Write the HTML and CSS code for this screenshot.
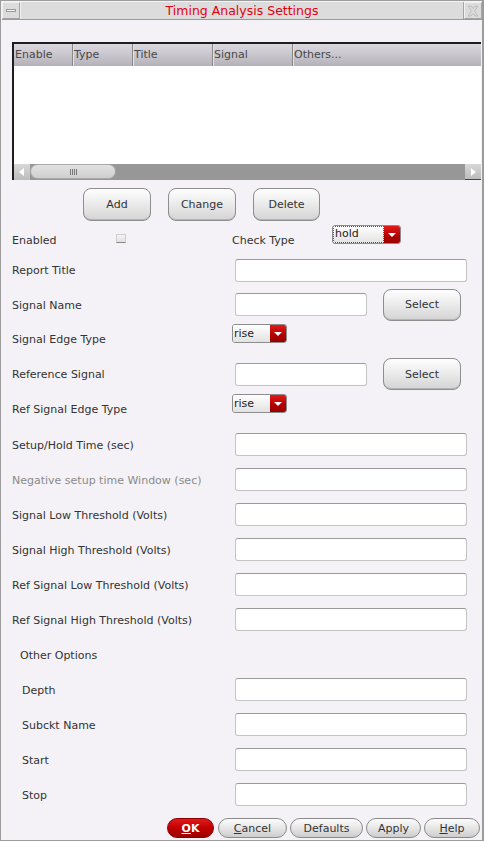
FILE: index.html
```html
<!DOCTYPE html>
<html>
<head>
<meta charset="utf-8">
<link rel="stylesheet" href="styles.css">
</head>
<body>
<div class="win">
  <div class="titlebar">
    <div class="tb-btn"><span class="min-bar"></span></div>
    <div class="title">Timing Analysis Settings</div>
    <div class="tb-btn">
      <svg width="14" height="14" viewBox="0 0 14 14"><path d="M2 2 L5 2 L7 4.5 L9 2 L12 2 L8.5 7 L12 12 L9 12 L7 9.5 L5 12 L2 12 L5.5 7 Z" fill="none" stroke="#bdbdbd" stroke-width="1"/></svg>
    </div>
  </div>
  <div class="content">
    <div class="table">
      <div class="thead">
        <div class="th c1">Enable</div>
        <div class="th c2">Type</div>
        <div class="th c3">Title</div>
        <div class="th c4">Signal</div>
        <div class="th c5">Others...</div>
      </div>
      <div class="tbody"></div>
      <div class="hscroll">
        <div class="sb-btn"><svg width="8" height="10" viewBox="0 0 8 10"><path d="M6 1 L1 5 L6 9 Z" fill="#fff"/></svg></div>
        <div class="sb-thumb"><span class="grip"></span></div>
        <div class="sb-track"></div>
        <div class="sb-btn right"><svg width="8" height="10" viewBox="0 0 8 10"><path d="M2 1 L7 5 L2 9 Z" fill="#fff"/></svg></div>
      </div>
    </div>

    <div class="btnrow">
      <div class="btn w-add">Add</div>
      <div class="btn w-change">Change</div>
      <div class="btn w-delete">Delete</div>
    </div>

    <div class="form">
      <div class="row h30 top">
        <div class="lbl l-enabled">Enabled</div>
        <div class="check"></div>
        <div class="lbl l-check">Check Type</div>
        <div class="dd dd-hold"><div class="dd-text"><span class="focus">hold</span></div><div class="dd-arrow"><svg width="8" height="6" viewBox="0 0 8 6"><path d="M0 1 L8 1 L4 5 Z" fill="#fff"/></svg></div></div>
      </div>
      <div class="row h30">
        <div class="lbl">Report Title</div>
        <div class="input long"></div>
      </div>
      <div class="row h39">
        <div class="lbl">Signal Name</div>
        <div class="input short"></div>
        <div class="btn sel">Select</div>
      </div>
      <div class="row h30 top">
        <div class="lbl">Signal Edge Type</div>
        <div class="dd dd-rise"><div class="dd-text">rise</div><div class="dd-arrow"><svg width="8" height="6" viewBox="0 0 8 6"><path d="M0 1 L8 1 L4 5 Z" fill="#fff"/></svg></div></div>
      </div>
      <div class="row h40">
        <div class="lbl">Reference Signal</div>
        <div class="input short"></div>
        <div class="btn sel">Select</div>
      </div>
      <div class="row h33 top">
        <div class="lbl">Ref Signal Edge Type</div>
        <div class="dd dd-rise"><div class="dd-text">rise</div><div class="dd-arrow"><svg width="8" height="6" viewBox="0 0 8 6"><path d="M0 1 L8 1 L4 5 Z" fill="#fff"/></svg></div></div>
      </div>
      <div class="row"><div class="lbl">Setup/Hold Time (sec)</div><div class="input long"></div></div>
      <div class="row"><div class="lbl dim">Negative setup time Window (sec)</div><div class="input long"></div></div>
      <div class="row"><div class="lbl">Signal Low Threshold (Volts)</div><div class="input long"></div></div>
      <div class="row"><div class="lbl">Signal High Threshold (Volts)</div><div class="input long"></div></div>
      <div class="row"><div class="lbl">Ref Signal Low Threshold (Volts)</div><div class="input long"></div></div>
      <div class="row"><div class="lbl">Ref Signal High Threshold (Volts)</div><div class="input long"></div></div>
      <div class="row"><div class="lbl ind1">Other Options</div></div>
      <div class="row"><div class="lbl ind2">Depth</div><div class="input long"></div></div>
      <div class="row"><div class="lbl ind2">Subckt Name</div><div class="input long"></div></div>
      <div class="row"><div class="lbl ind2">Start</div><div class="input long"></div></div>
      <div class="row"><div class="lbl ind2">Stop</div><div class="input long"></div></div>
    </div>

    <div class="footer">
      <div class="pill ok"><u>O</u>K</div>
      <div class="pill w-cancel"><u>C</u>ancel</div>
      <div class="pill w-defaults">Defaults</div>
      <div class="pill w-apply">Apply</div>
      <div class="pill w-help"><u>H</u>elp</div>
    </div>
  </div>
</div>
</body>
</html>
```
FILE: styles.css
```css
* { box-sizing: border-box; }
html, body { margin: 0; padding: 0; }
body {
  font-family: "DejaVu Sans", sans-serif;
  font-size: 11px;
  color: #333;
  background: #f4f2f6;
}
.win {
  width: 484px;
  height: 841px;
  border: 1px solid #9c9c9c;
  border-right: 2px solid #9c9c9c;
  background: #f4f2f6;
  display: flex;
  flex-direction: column;
}
.titlebar {
  margin: 1px 0 0 1px;
  width: 480px;
  height: 18px;
  display: flex;
  background: #dcdcdc;
  border-bottom: 1px solid #9a9a9a;
}
.tb-btn {
  width: 18px;
  height: 17px;
  background: #dcdcdc;
  border: 1px solid #a4a4a4;
  border-top-color: #f0f0f0;
  border-left-color: #f0f0f0;
  display: flex;
  align-items: center;
  justify-content: center;
}
.min-bar {
  width: 10px;
  height: 3px;
  border: 1px solid #9a9a9a;
  background: #f4f4f4;
}
.title {
  flex: 1;
  text-align: center;
  color: #e4000c;
  font-size: 12.5px;
  line-height: 17px;
  border-left: 1px solid #f0f0f0;
  border-right: 1px solid #a4a4a4;
}
.content {
  flex: 1;
  display: flex;
  flex-direction: column;
  padding-left: 11px;
}
.table {
  margin-top: 22px;
  width: 469px;
  height: 138px;
  border-top: 2px solid #1e1e1e;
  border-left: 2px solid #1e1e1e;
  display: flex;
  flex-direction: column;
  background: #fff;
}
.thead {
  height: 22px;
  display: flex;
  background: linear-gradient(#dcd8e0, #c9c5cd 50%, #b5b1b9);
}
.th {
  height: 22px;
  line-height: 22px;
  padding-left: 1px;
  color: #484848;
  border-right: 1px solid #888;
  box-shadow: 1px 0 0 #e4e0e8;
}
.c1 { width: 59px; }
.c2 { width: 60px; }
.c3 { width: 80px; }
.c4 { width: 80px; }
.c5 { flex: 1; border-right: none; box-shadow: none; }
.tbody { flex: 1; background: #fff; }
.hscroll {
  height: 16px;
  display: flex;
  background: #979797;
}
.sb-btn {
  width: 16px;
  height: 16px;
  background: linear-gradient(#d8d8d8, #bcbcbc);
  display: flex;
  align-items: center;
  justify-content: center;
}
.sb-btn.right { border-bottom: 1px solid #444; }
.sb-thumb {
  width: 86px;
  height: 15px;
  border-radius: 8px;
  background: linear-gradient(#e2e2e2, #cfcfcf);
  border: 1px solid #a8a8a8;
  display: flex;
  align-items: center;
  justify-content: center;
}
.grip {
  width: 7px;
  height: 6px;
  background: repeating-linear-gradient(90deg, #777 0 1px, transparent 1px 2px);
}
.sb-track { flex: 1; }

.btnrow {
  margin-top: 8px;
  height: 33px;
  display: flex;
  gap: 17px;
  padding-left: 71px;
}
.btn {
  height: 33px;
  border: 1px solid #8e8e8e;
  border-radius: 8px;
  background: linear-gradient(#fefefe, #ececec 45%, #d4d4d4);
  box-shadow: inset 0 -1px 0 #b4b4b4;
  display: flex;
  align-items: center;
  justify-content: center;
  color: #333;
}
.w-add { width: 68px; }
.w-change { width: 68px; }
.w-delete { width: 67px; }

.form {
  margin-top: 4px;
  display: flex;
  flex-direction: column;
}
.row {
  height: 35px;
  display: flex;
  align-items: center;
}
.row .lbl { margin-top: 2px; }
.row.top { align-items: flex-start; }
.row.top .lbl { margin-top: 9px; }
.h30 { height: 30px; }
.h33 { height: 33px; }
.h39 { height: 39px; }
.h40 { height: 40px; }
.lbl {
  width: 223px;
  flex: none;
  line-height: 14px;
  white-space: nowrap;
  color: #333;
}
.lbl.dim { color: #8a8a8a; }
.lbl.ind1 { padding-left: 8px; }
.lbl.ind2 { padding-left: 10px; }
.l-enabled { width: 104px; }
.check {
  margin-top: 9px;
  width: 10px;
  height: 9px;
  background: linear-gradient(#f4f4f4, #e0e0e0);
  border: 1px solid #cfcfcf;
  border-bottom: 1px solid #8a8a8a;
  margin-right: 106px;
}
.l-check { width: 100px; }
.input {
  height: 23px;
  background: #fff;
  border: 1px solid #c4c4c4;
  border-top-color: #9a9a9a;
  border-radius: 3px;
}
.input.long { width: 232px; }
.input.short { width: 132px; }
.btn.sel { width: 78px; height: 32px; margin-left: 16px; }

.dd {
  height: 19px;
  display: flex;
  border: 1px solid #8c8c8c;
  border-radius: 3px;
  overflow: hidden;
}
.dd-text {
  flex: 1;
  background: linear-gradient(#ffffff, #e2e2e2);
  padding-left: 1px;
  line-height: 17px;
  color: #222;
  font-size: 11px;
}
.dd-hold { width: 69px; }
.dd-hold .dd-text { padding: 1px; }
.focus {
  display: block;
  height: 15px;
  line-height: 14px;
  outline: 1px dotted #555;
  outline-offset: 0;
  padding-left: 1px;
}
.dd-rise { width: 55px; margin-left: -3px; }
.dd-arrow {
  width: 16px;
  background: linear-gradient(#e41a1a, #b00000 60%, #9a0000);
  display: flex;
  align-items: center;
  justify-content: center;
}

.footer {
  margin-top: 6px;
  height: 20px;
  display: flex;
  justify-content: flex-end;
  gap: 3px;
  padding-right: 2px;
}
.pill {
  height: 20px;
  border: 1px solid #8a8a8a;
  border-radius: 10px;
  background: linear-gradient(#fcfcfc, #e6e6e6 50%, #cdcdcd);
  display: flex;
  align-items: center;
  justify-content: center;
  color: #333;
}
.pill u { text-decoration: underline; }
.ok {
  width: 47px;
  background: linear-gradient(#e31a1a, #c00000 50%, #9c0000);
  border-color: #8a0000;
  color: #fff;
  font-weight: bold;
  margin-right: 1px;
}
.w-cancel { width: 69px; }
.w-defaults { width: 73px; }
.w-apply { width: 55px; }
.w-help { width: 56px; }
```
